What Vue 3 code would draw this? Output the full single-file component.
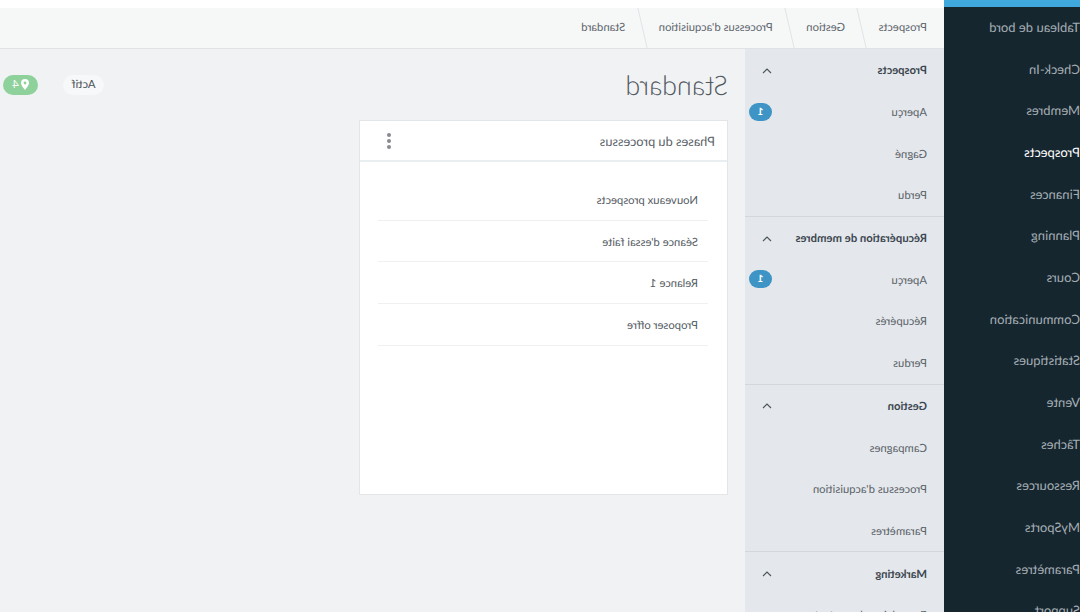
<script setup>
// Lead-pipeline admin page. The whole screen is drawn mirrored, so the root flips it.
const mainNav = [
  'Tableau de bord', 'Check-In', 'Membres', 'Prospects', 'Finances', 'Planning', 'Cours',
  'Communication', 'Statistiques', 'Vente', 'Tâches', 'Ressources', 'MySports', 'Paramètres', 'Support',
]
const crumbs = ['Prospects', 'Gestion', "Processus d'acquisition", 'Standard']
const sections = [
  { title: 'Prospects', items: [{ name: 'Aperçu', badge: 1 }, { name: 'Gagné' }, { name: 'Perdu' }] },
  { title: 'Récupération de membres', items: [{ name: 'Aperçu', badge: 1 }, { name: 'Récupérés' }, { name: 'Perdus' }] },
  { title: 'Gestion', items: [{ name: 'Campagnes' }, { name: "Processus d'acquisition" }, { name: 'Paramètres' }] },
  { title: 'Marketing', items: [{ name: 'Formulaires de contact' }] },
]
const phases = ['Nouveaux prospects', "Séance d'essai faite", 'Relance 1', 'Proposer offre']
</script>

<template>
  <div class="screen">
    <aside class="sidebar">
      <div class="sidebar-top"></div>
      <a v-for="item in mainNav" :key="item" class="side-link" :class="{ active: item === 'Prospects' }">{{ item }}</a>
    </aside>

    <div class="main">
      <div class="top-strip"></div>
      <nav class="crumbs">
        <span v-for="c in crumbs" :key="c" class="crumb">{{ c }}</span>
      </nav>

      <div class="body">
        <div class="subnav">
          <section v-for="s in sections" :key="s.title" class="sub-section">
            <div class="sub-row sub-head">
              <span>{{ s.title }}</span>
              <svg class="chev" width="10" height="6" viewBox="0 0 10 6">
                <path d="M1 5l4-4 4 4" fill="none" stroke="#4a545d" stroke-width="1.1" />
              </svg>
            </div>
            <div v-for="it in s.items" :key="it.name" class="sub-row">
              <span>{{ it.name }}</span>
              <span v-if="it.badge" class="badge">{{ it.badge }}</span>
            </div>
          </section>
        </div>

        <main class="content">
          <header class="page-head">
            <h1>Standard</h1>
            <div class="pills">
              <span class="pill">Actif</span>
              <span class="pill green">
                <svg width="8" height="11" viewBox="0 0 8 11">
                  <path fill-rule="evenodd" d="M4 0a4 4 0 0 1 4 4c0 2.500-2.300 4.800-4 7C2.300 8.800 0 6.500 0 4a4 4 0 0 1 4-4zm0 2.600a1.400 1.400 0 1 0 0 2.800 1.400 1.400 0 0 0 0-2.800z" fill="#fff" />
                </svg>
                4
              </span>
            </div>
          </header>

          <div class="card">
            <div class="card-head">
              <span>Phases du processus</span>
              <span class="dots"><i></i><i></i><i></i></span>
            </div>
            <ul class="phases">
              <li v-for="p in phases" :key="p">{{ p }}</li>
            </ul>
          </div>
        </main>
      </div>
    </div>
  </div>
</template>

<style>
html, body {
  margin: 0;
  overflow: hidden;
}
</style>

<style scoped>
.screen {
  width: 1080px;
  height: 612px;
  display: flex;
  overflow: hidden;
  transform: scaleX(-1);
  background: #f0f2f4;
  color: #555c63;
  font-family: Lato, sans-serif;
  font-size: 11.3px;
  text-rendering: geometricPrecision;
}

.sidebar {
  width: 136px;
  flex: none;
  background: #16262f;
  overflow: hidden;
}
.sidebar-top {
  height: 7px;
  margin-bottom: -1px;
  background: #3fa9dd;
}
.side-link {
  display: flex;
  align-items: center;
  height: 41.7px;
  color: #a4adb3;
  font-size: 13px;
  white-space: nowrap;
}
.side-link.active {
  color: #fff;
}

.main {
  flex: 1;
  min-width: 0;
  display: flex;
  flex-direction: column;
}
.top-strip {
  height: 8px;
  background: #fff;
}
.crumbs {
  height: 40px;
  flex: none;
  display: flex;
  align-items: center;
  padding-left: 17px;
  background: #f6f8f8;
  border-bottom: 1px solid #dfe3e6;
}
.crumb {
  position: relative;
  height: 40px;
  line-height: 39px;
  margin-right: 33.5px;
  color: #5f666d;
  white-space: nowrap;
}
.crumb::after {
  content: '';
  position: absolute;
  top: 0;
  bottom: 0;
  right: -17px;
  width: 1px;
  background: #dfe3e6;
  transform: skewX(-13deg);
}
.crumb:last-child::after {
  display: none;
}

.body {
  flex: 1;
  min-height: 0;
  display: flex;
}

.subnav {
  width: 199px;
  flex: none;
  background: #e4e8ec;
}
.sub-section {
  border-bottom: 1px solid #d2d7db;
}
.sub-row {
  height: 41.7px;
  display: flex;
  align-items: center;
  justify-content: space-between;
  padding: 2px 4px 0 17px;
  box-sizing: border-box;
  white-space: nowrap;
  color: #5b6268;
}
.sub-head {
  font-weight: 700;
  color: #3c4650;
  padding-right: 17px;
}
.badge {
  width: 23px;
  height: 18px;
  margin-top: -2px;
  border-radius: 9px;
  background: #3d94c5;
  color: #fff;
  font-size: 10px;
  font-weight: 700;
  text-align: center;
  line-height: 18px;
}

.content {
  flex: 1;
  min-width: 0;
  padding: 0 3px 0 17px;
}
.page-head {
  height: 71px;
  display: flex;
  align-items: center;
  justify-content: space-between;
}
h1 {
  margin: 0;
  font-size: 27px;
  font-weight: 300;
  color: #50575e;
}
.pills {
  display: flex;
  gap: 25px;
}
.pill {
  display: flex;
  align-items: center;
  justify-content: center;
  gap: 2px;
  width: 41px;
  height: 20px;
  border-radius: 10px;
  background: #f7f8f9;
  color: #4a5157;
}
.pill.green {
  width: 35px;
  background: #8ed19b;
  color: #fff;
}

.card {
  width: 369px;
  height: 375px;
  box-sizing: border-box;
  background: #fff;
  border: 1px solid #e3e6e9;
}
.card-head {
  height: 41px;
  box-sizing: border-box;
  display: flex;
  align-items: center;
  justify-content: space-between;
  padding: 0 27px 0 12px;
  border-bottom: 2px solid #e9eef0;
  font-size: 12.8px;
  color: #5b6268;
}
.dots {
  display: flex;
  flex-direction: column;
  gap: 2px;
}
.dots i {
  width: 4px;
  height: 4px;
  border-radius: 50%;
  background: #858b90;
}
.phases {
  list-style: none;
  margin: 17px 18px 0 19px;
  padding: 0;
}
.phases li {
  height: 41.7px;
  line-height: 43px;
  box-sizing: border-box;
  padding-left: 10px;
  border-bottom: 1px solid #eef0f2;
}
</style>
